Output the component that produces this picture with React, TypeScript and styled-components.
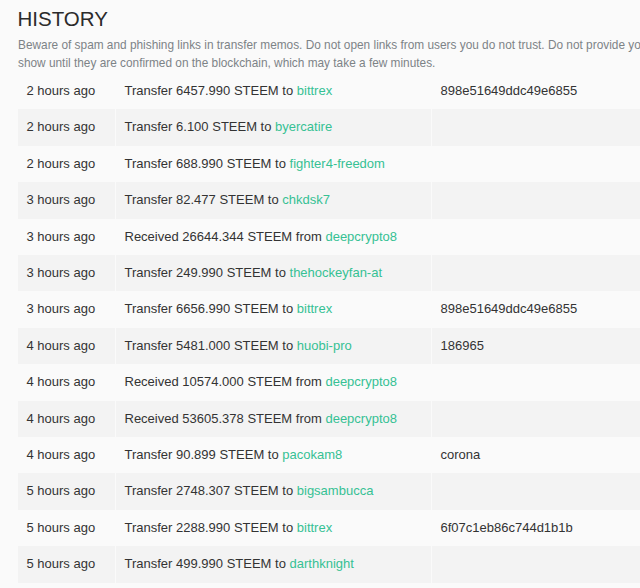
import React, { FC } from 'react';
import styled, { createGlobalStyle } from 'styled-components';

const GlobalStyle = createGlobalStyle`
  html, body {
    margin: 0;
    padding: 0;
    background: #fafafa;
    overflow: hidden;
  }
  body {
    font-family: "Liberation Sans", Arial, sans-serif;
    color: #333;
  }
`;

const Page = styled.main`
  width: 1040px;
  padding: 5.5px 0 0 17.5px;
`;

const Title = styled.h2`
  margin: 0;
  font-size: 20.5px;
  line-height: 25px;
  font-weight: normal;
  color: #2b2b2b;
`;

const Notice = styled.p`
  margin: 5px 0 1.5px;
  padding-left: 0.5px;
  font-size: 11.85px;
  line-height: 18px;
  color: #7d8387;
  white-space: nowrap;
`;

const Table = styled.table`
  width: 1000px;
  margin-left: 0.5px;
  table-layout: fixed;
  border-collapse: separate;
  border-spacing: 0;
  font-size: 13px;
  color: #333;
`;

const Row = styled.tr<{ $striped: boolean }>`
  background: ${(p) => (p.$striped ? '#f3f3f3' : 'transparent')};
`;

const Cell = styled.td`
  box-sizing: border-box;
  padding: 9px 8.5px;
  line-height: 18.4px;
  white-space: nowrap;
  overflow: hidden;
  & + & {
    border-left: 1px solid #fafafa;
  }
`;

const Account = styled.a`
  color: #36c194;
  text-decoration: none;
`;

type Entry = {
  when: string;
  kind: 'to' | 'from';
  amount: string;
  account: string;
  memo?: string;
};

const HISTORY: Entry[] = [
  { when: '2 hours ago', kind: 'to', amount: '6457.990', account: 'bittrex', memo: '898e51649ddc49e6855' },
  { when: '2 hours ago', kind: 'to', amount: '6.100', account: 'byercatire' },
  { when: '2 hours ago', kind: 'to', amount: '688.990', account: 'fighter4-freedom' },
  { when: '3 hours ago', kind: 'to', amount: '82.477', account: 'chkdsk7' },
  { when: '3 hours ago', kind: 'from', amount: '26644.344', account: 'deepcrypto8' },
  { when: '3 hours ago', kind: 'to', amount: '249.990', account: 'thehockeyfan-at' },
  { when: '3 hours ago', kind: 'to', amount: '6656.990', account: 'bittrex', memo: '898e51649ddc49e6855' },
  { when: '4 hours ago', kind: 'to', amount: '5481.000', account: 'huobi-pro', memo: '186965' },
  { when: '4 hours ago', kind: 'from', amount: '10574.000', account: 'deepcrypto8' },
  { when: '4 hours ago', kind: 'from', amount: '53605.378', account: 'deepcrypto8' },
  { when: '4 hours ago', kind: 'to', amount: '90.899', account: 'pacokam8', memo: 'corona' },
  { when: '5 hours ago', kind: 'to', amount: '2748.307', account: 'bigsambucca' },
  { when: '5 hours ago', kind: 'to', amount: '2288.990', account: 'bittrex', memo: '6f07c1eb86c744d1b1b' },
  { when: '5 hours ago', kind: 'to', amount: '499.990', account: 'darthknight' },
];

const App: FC = () => {
  return (
    <>
      <GlobalStyle />
      <Page>
        <Title>HISTORY</Title>
        <Notice>
          Beware of spam and phishing links in transfer memos. Do not open links from users you do not trust. Do not provide your private keys to any third party websites. Transactions will not
          <br />
          show until they are confirmed on the blockchain, which may take a few minutes.
        </Notice>
        <Table>
          <colgroup>
            <col style={{ width: 97 }} />
            <col style={{ width: 316 }} />
            <col />
          </colgroup>
          <tbody>
            {HISTORY.map((entry, i) => (
              <Row key={i} $striped={i % 2 === 1}>
                <Cell>{entry.when}</Cell>
                <Cell>
                  {entry.kind === 'to' ? 'Transfer' : 'Received'} {entry.amount} STEEM {entry.kind}{' '}
                  <Account href="#">{entry.account}</Account>
                </Cell>
                <Cell>{entry.memo ?? ''}</Cell>
              </Row>
            ))}
          </tbody>
        </Table>
      </Page>
    </>
  );
};

export default App;
